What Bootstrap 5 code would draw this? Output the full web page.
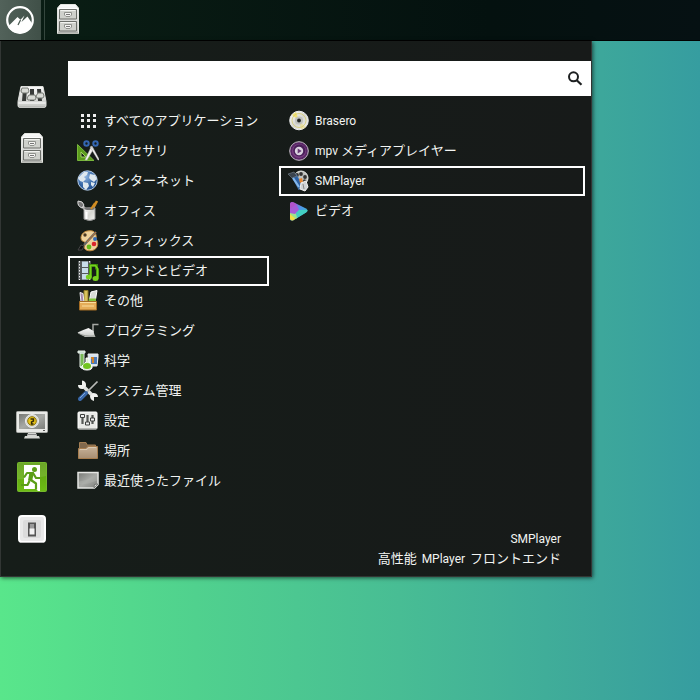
<!DOCTYPE html>
<html lang="ja">
<head>
<meta charset="utf-8">
<meta name="viewport" content="width=device-width, initial-scale=1">
<title>アプリケーションメニュー</title>
<link href="https://cdn.jsdelivr.net/npm/bootstrap@5.3.0/dist/css/bootstrap.min.css" rel="stylesheet">
<style>
body { font-family: "Noto Sans CJK JP", sans-serif; font-size: 13px; line-height: 20px; color: #f2f4f2;
  background: linear-gradient(to right, #59e68b 0%, #50d18e 28%, #48bd94 57%, #3da79b 86%, #369da0 100%); }
svg { display: block; flex: none; }
.latin { font-family: Roboto, sans-serif; font-size: 12px; }
.panel { height: 41px; background: linear-gradient(to right, #0a1e14, #04110f 70%, #061113); border-bottom: 1px solid #000; }
.panel button, .side button { border: 0; padding: 0; background: none; }
.panel .launcher { width: 41px; padding-right: 1px; background: linear-gradient(to right, #52625a, #405048); }
.divider { width: 1px; margin: 0 7px 0 3px; background: #35473e; }
.menu { width: 100%; max-width: 592px; height: 536px; background: linear-gradient(to right, #161d19, #171a19);
  border: solid #323634; border-width: 0 1px 1px 1px; box-shadow: 1px 1px 4px rgba(0,0,0,.6); }
.side { width: 67px; padding: 40px 20px 30px 15px; gap: 20px; }
.content-pane { padding-top: 20px; }
.search-box { height: 35px; background: #fff; color: #1d2021; }
.search-box input { font-size: 13px; outline: 0; }
.search-box label { padding-right: 8px; }
.lists { padding: 10px 6px 0 0; gap: 10px; }
.categories { flex: 201 1 0; }
.apps { flex: 306 1 0; }
.entry { height: 30px; gap: 5px; padding: 0 7px; border: 2px solid transparent; background: none; color: inherit; text-align: left; white-space: nowrap; }
.entry.chosen { border-color: #fff; }
.entry > span { margin-top: -2px; }
.entry > .latin { margin-top: 0; }
.summary { padding: 0 30px 9px; line-height: 20px; }
.summary div { height: 19px; }
.summary div .latin { padding: 0 2px; }
</style>
</head>
<body class="min-vh-100">
<svg width="0" height="0" class="position-absolute" aria-hidden="true">
  <defs>
    <linearGradient id="metal" x2="0" y2="1"><stop stop-color="#fafafa"/><stop offset="1" stop-color="#c4c6c2"/></linearGradient>
    <linearGradient id="silver" x2="1" y2="1"><stop stop-color="#fff"/><stop offset=".5" stop-color="#d5d5d0"/><stop offset="1" stop-color="#f5f5f2"/></linearGradient>
    <linearGradient id="gray" x2="1" y2="1"><stop stop-color="#777975"/><stop offset=".5" stop-color="#a8aaa6"/><stop offset="1" stop-color="#7c7e7a"/></linearGradient>
    <linearGradient id="green" x2="0" y2="1"><stop stop-color="#5b9b10"/><stop offset="1" stop-color="#6dbc15"/></linearGradient>
    <radialGradient id="ocean" cx=".4" cy=".3" r=".8"><stop stop-color="#8fb4e0"/><stop offset=".6" stop-color="#3465a4"/><stop offset="1" stop-color="#204a87"/></radialGradient>
    <linearGradient id="tan" x2="0" y2="1"><stop stop-color="#c7b299"/><stop offset="1" stop-color="#a78e72"/></linearGradient>
    <linearGradient id="play" x2="1" y2="1"><stop stop-color="#a94fd0"/><stop offset=".5" stop-color="#4b9be8"/><stop offset="1" stop-color="#2fd0b0"/></linearGradient>
    <symbol id="cabinet" viewBox="0 0 32 32">
      <path d="M8.500 .5h15l3 3.500v25.500h-21V4z" fill="url(#metal)" stroke="#e2e4df"/>
      <path d="M6 4.500h20" stroke="#fff"/>
      <path d="M7.500 5.500h17v9.500h-17zM7.500 17.500h17v9.500h-17z" fill="#cfd1cc" stroke="#6c6f6a"/>
      <path d="M8.500 6.500h15M8.500 18.500h15" stroke="#f2f3f0"/>
      <path d="M12.500 8.500h7v2.500l-1.500 1.500h-4l-1.500-1.500zM12.500 20.500h7v2.500l-1.500 1.500h-4l-1.500-1.500z" fill="#f4f4f2" stroke="#8f918c"/>
      <path d="M14 10.500h4M14 22.500h4" stroke="#777"/>
      <path d="M6 29h20" stroke="#999b96"/>
    </symbol>
  </defs>
</svg>

<nav class="panel d-flex" aria-label="パネル">
  <button class="launcher d-flex align-items-center justify-content-center" type="button" aria-label="メニュー">
    <svg width="28" height="28" viewBox="0 0 28 28"><circle cx="14" cy="14" r="12.800" fill="none" stroke="#fff" stroke-width="2.200"/><path d="M2 20.500 11.500 11l3 2.800L18.500 9.500 15.500 16l6-5.500 5 7.500a13.500 13.500 0 0 1-24.500 2.500z" fill="#fff"/><path d="m14.500 14-2.500 5" stroke="#4a5a52" stroke-width="1.200"/></svg>
  </button>
  <span class="divider"></span>
  <button type="button" aria-label="ファイル"><svg width="32" height="32"><use href="#cabinet"/></svg></button>
</nav>

<main class="menu d-flex">
  <aside class="side d-flex flex-column flex-shrink-0">
    <button type="button" aria-label="設定"><svg width="32" height="32" viewBox="0 0 32 32">
      <path d="M5 5.500h22l3 15v4q0 2-2 2H4q-2 0-2-2v-4z" fill="url(#metal)" stroke="#dedfdc"/><path d="M2.500 22h27" stroke="#fff"/><path d="M3 26h26" stroke="#aaaca8"/>
      <path d="M7 8h4l-1 12H6zM14 8h4v12h-4zM21 8h4l1 12h-4z" fill="#383b39"/>
      <path d="M6 7h6l1 3-1 2H6l-1-2zM13 14h6l1 3-1 2h-7l-1-2zM22 12h5l1 3-1 2h-6l-1-2z" fill="#d8dad5" stroke="#777a75"/>
    </svg></button>
    <button type="button" aria-label="ファイル"><svg width="32" height="32"><use href="#cabinet"/></svg></button>
    <button class="mt-auto" type="button" aria-label="画面をロック"><svg width="32" height="32" viewBox="0 0 32 32">
      <path d="M12 23h8l1 3h2l1 2.500H8L9 26h2z" fill="#d5d7d3"/><path d="M11 24.500h10" stroke="#888"/>
      <rect x=".5" y="1.500" width="31" height="21" rx="1" fill="#e9eae7" stroke="#aaaca8"/><rect x="3" y="4" width="26" height="15" fill="url(#gray)"/>
      <circle cx="16" cy="11" r="6.500" fill="#d7d9d3" stroke="#eee"/><circle cx="16" cy="11" r="4.300" fill="#e9c51c" stroke="#8d7508"/>
      <path d="M14.500 9h3v2l-2 1v2h2" fill="none" stroke="#342c08" stroke-width="1.400"/><path d="M27 20.500h2" stroke="#555"/>
    </svg></button>
    <button type="button" aria-label="ログアウト"><svg width="32" height="32" viewBox="0 0 32 32">
      <rect x="1.500" y=".5" width="29" height="29" rx="1" fill="url(#green)" stroke="#75b72d"/><path d="M8 3h16v26h-2l-2-2H8z" fill="#fff"/>
      <path d="M2 1h28v13Q16 18 2 17z" fill="#fff" opacity=".1"/>
      <circle cx="18.500" cy="7.500" r="2.500" fill="#5b9e18"/>
      <path d="M14 11h-3l-3 4.500M17 11l3 5h4M13.500 19l-2 4H5M15 18l5 3.500v6" fill="none" stroke="#5b9e18" stroke-width="2.200" stroke-linejoin="round"/><path d="M13.500 10h4.500l-2 9.500-4-1z" fill="#5b9e18"/>
    </svg></button>
    <button type="button" aria-label="シャットダウン"><svg width="32" height="32" viewBox="0 0 32 32">
      <rect x="3" y="2" width="26" height="26" rx="3" fill="#e9e9e9" stroke="#fff" stroke-width="2"/><path d="M4 28.500h24" stroke="#b7b7b7"/>
      <rect x="7" y="6" width="18" height="18" rx="2" fill="#dcdcdc"/><rect x="12" y="8.500" width="8" height="14" fill="#555"/><path d="M14 10h4v5h-4z" fill="#999"/><path d="M13.500 14.500h5v6h-5z" fill="#f2f2f2"/>
    </svg></button>
  </aside>

  <section class="content-pane d-flex flex-column flex-grow-1">
    <div class="search-box d-flex align-items-center">
      <input id="search" class="flex-grow-1 border-0 bg-transparent h-100 px-2" type="text" autocomplete="off">
      <label for="search" aria-label="検索"><svg width="16" height="16" viewBox="0 0 16 16"><circle cx="6.500" cy="5.800" r="4.500" fill="none" stroke="currentColor" stroke-width="2"/><path d="m9.700 9.200 4.800 4.600" stroke="currentColor" stroke-width="2.200"/></svg></label>
    </div>
    <div class="lists d-flex align-items-start">
      <div class="categories d-flex flex-column">
        <button class="entry d-flex align-items-center" type="button"><svg width="22" height="22" viewBox="0 0 22 22"><path d="M4 4h3v3H4zm6 0h3v3h-3zm6 0h3v3h-3zM4 9h3v3H4zm6 0h3v3h-3zm6 0h3v3h-3zM4 15h3v3H4zm6 0h3v3h-3zm6 0h3v3h-3z" fill="#eee"/></svg><span>すべてのアプリケーション</span></button>
        <button class="entry d-flex align-items-center" type="button"><svg width="22" height="22" viewBox="0 0 22 22"><path d="M.5 4.500v16H17z" fill="#5b9c1c" stroke="#78b63b"/><path d="M4 12v5h5z" fill="#171d19" stroke="#a4d366"/><path d="m8 20 6-13 2.500 2-6.500 11zM21 20l-8-13 2-1 7.500 14z" fill="#f4f4f2" stroke="#aaa" stroke-width=".5"/><circle cx="9.500" cy="3.500" r="2.200" fill="none" stroke="#3467b3" stroke-width="2"/><circle cx="18.500" cy="3.500" r="2.200" fill="none" stroke="#3467b3" stroke-width="2"/></svg><span>アクセサリ</span></button>
        <button class="entry d-flex align-items-center" type="button"><svg width="22" height="22" viewBox="0 0 22 22"><circle cx="10.500" cy="10.500" r="9.700" fill="url(#ocean)" stroke="#b5cce8"/><path d="m3 6 4-4h4l-1 3-3 2 2 2-3 3-3-1-2-3zM6 12l5 1 1 3-3 4-3-3zM13 4l5 1 2 4-3 3-3-2-2-2zM14 12l4 1-2 4-2-2z" fill="#dfe8ee"/></svg><span>インターネット</span></button>
        <button class="entry d-flex align-items-center" type="button"><svg width="22" height="22" viewBox="0 0 22 22"><path d="M2 3l8 8" stroke="#bbb" stroke-width="3"/><path d="M1 1q5 0 6 4l-2 3Q0 6 1 1z" fill="#777" stroke="#ddd"/><path d="m14 12 6-11" stroke="#d28d22" stroke-width="2.600"/><path d="M7 8h11v11q-5 3-11 0z" fill="url(#silver)" stroke="#999"/><ellipse cx="12.500" cy="8.500" rx="5" ry="1.500" fill="#777"/><path d="m14 9 4-6" stroke="#d28d22" stroke-width="2"/><path d="M9.500 12v7" stroke="#fff" stroke-width="2"/></svg><span>オフィス</span></button>
        <button class="entry d-flex align-items-center" type="button"><svg width="22" height="22" viewBox="0 0 22 22"><path d="M12 .8c6-1 8 4 7 8 4 5 1 12-6 12-5 0-7-3-5-6 2-2-1-3-3-4-3-4 1-10 7-10z" fill="#efd29c" stroke="#bd873c"/><circle cx="8" cy="5" r="1.700" fill="#4c3a22"/><circle cx="18" cy="9" r="2" fill="#346cb6"/><circle cx="17" cy="14" r="2.300" fill="#d9262c"/><circle cx="12" cy="17" r="2.400" fill="#65b91b"/><path d="m19 2-12 13" stroke="#666" stroke-width="2.400"/><path d="m19 2-9 10" stroke="#c7752b"/><path d="m1 20 3-5 3 1-2 4z" fill="#111" stroke="#444"/></svg><span>グラフィックス</span></button>
        <button class="entry chosen d-flex align-items-center" type="button" aria-pressed="true"><svg width="22" height="22" viewBox="0 0 22 22"><path d="M1 1h13v19H1z" fill="#555a5b"/><path d="M5 1.500h6V7H5zM5 8h6v5H5zm0 6h6v5.500H5z" fill="#c7dce9"/><path d="M2.500 1v19M12.500 1v19" stroke="#eee" stroke-dasharray="1.500"/><path d="M13.500 17V5.500h6v3l1 1v9" fill="none" stroke="#398a07" stroke-width="3"/><ellipse cx="11.800" cy="17" rx="3" ry="2.500" fill="#77d01e"/><ellipse cx="18.500" cy="18.500" rx="3" ry="2.500" fill="#77d01e"/><path d="M13.500 16V5.500h5l2 3v9" fill="none" stroke="#77d01e" stroke-width="1.700"/></svg><span>サウンドとビデオ</span></button>
        <button class="entry d-flex align-items-center" type="button"><svg width="22" height="22" viewBox="0 0 22 22"><path d="M7 .5h4V13H7z" fill="#d7c35c" stroke="#917d24"/><path d="m3 2.500 3 1 1 9H4z" fill="#a488a9" stroke="#eee"/><path d="m14 2 6-1.500-2 12h-6z" fill="#d8dbd7" stroke="#fff"/><path d="M12 8.500h7v4h-7z" fill="#80c53b"/><path d="M2.500 11.500h17v8.500h-17z" fill="#e5ad59" stroke="#a46c24"/><path d="M3 12.500h16M5 16h12" stroke="#f9dd9f"/></svg><span>その他</span></button>
        <button class="entry d-flex align-items-center" type="button"><svg width="22" height="22" viewBox="0 0 22 22"><path d="M16 12V4.500h5.500" fill="none" stroke="#a6a8a4" stroke-width="1.500"/><path d="M.5 12.500q6-3 11-4.500l5 3 1 4 1 2H8z" fill="url(#metal)"/><path d="M1 13q6 4 17 3" stroke="#969994" fill="none"/></svg><span>プログラミング</span></button>
        <button class="entry d-flex align-items-center" type="button"><svg width="22" height="22" viewBox="0 0 22 22"><path d="M1 1h7v2H7v14q-2 3-4 0V3H1z" fill="#c8ded0" stroke="#e5eee7"/><path d="M3.500 4h3v12h-3z" fill="#79b956"/><path d="M11 4h10v3l-1 9h-8z" fill="#d7e4f0" stroke="#eee"/><path d="M14 7h6v7h-6z" fill="#4b79b7"/><path d="M14 8h2v5" stroke="#d28329" stroke-width="2" fill="none"/><path d="M9 8h3v4l3 4q1 4-5 4t-5-4l4-4z" fill="#deedd3" stroke="#fff"/><ellipse cx="10" cy="16" rx="4" ry="3" fill="#72c51f"/></svg><span>科学</span></button>
        <button class="entry d-flex align-items-center" type="button"><svg width="22" height="22" viewBox="0 0 22 22"><path d="m6 6 11 11" stroke="#dfe1de" stroke-width="3.500"/><path d="M5 .5V5H1q0 4.500 5 4l3-3q.5-5-4-5.500zM17 21v-4l4 0q0-4-5-4l-3 3q0 4 4 5z" fill="#f0f1ef"/><path d="m20.500 1.500-11.500 11.500" stroke="#b9bbb8" stroke-width="1.700"/><path d="m9 13-6 6" stroke="#3a69aa" stroke-width="4" stroke-linecap="round"/><path d="m8 13-5 5" stroke="#84aadd" stroke-width="1"/></svg><span>システム管理</span></button>
        <button class="entry d-flex align-items-center" type="button"><svg width="22" height="22" viewBox="0 0 22 22"><rect x="1" y="2" width="19" height="17" rx="1" fill="#e9eae7" stroke="#fff"/><path d="M1 18.500h19" stroke="#b5b7b3"/><path d="M5.500 5v9M10.500 5v9M15.500 5v9" stroke="#565956" stroke-width="2.200"/><path d="M3.500 4.500h4v3h-4zM8.500 12h4v3h-4zM13.500 8h4v3h-4z" fill="#eee" stroke="#3e413f"/></svg><span>設定</span></button>
        <button class="entry d-flex align-items-center" type="button"><svg width="22" height="22" viewBox="0 0 22 22"><path d="M2.500 9V2.500H9l1 2.500h8.500v4z" fill="#80684d" stroke="#a47f55"/><path d="M1.500 8.500H9l2-2h9.500v12h-19z" fill="url(#tan)" stroke="#a77d4e"/><path d="M3 9.500h7l1.500-2H19" fill="none" stroke="#d8c8b3"/></svg><span>場所</span></button>
        <button class="entry d-flex align-items-center" type="button"><svg width="22" height="22" viewBox="0 0 22 22"><path d="M1 2.500h20v12L17.500 18H1z" fill="url(#gray)" stroke="#e5e6e3" stroke-width="1.500"/><path d="M2 11.500Q10 10.500 20 4.500v6Q10 15 2 14z" fill="#b1b3af" opacity=".4"/><path d="m17 18 .5-3.500 3.500-.5z" fill="#d9dad7" stroke="#5f625f" stroke-width=".7"/></svg><span>最近使ったファイル</span></button>
      </div>
      <div class="apps d-flex flex-column">
        <button class="entry d-flex align-items-center" type="button"><svg width="22" height="22" viewBox="0 0 22 22"><circle cx="11" cy="10.500" r="9.300" fill="url(#silver)" stroke="#eee"/><path d="M11 10.500 4 5l4-3z" fill="#f1df58" opacity=".8"/><path d="m11 10.500 7 7-5 2z" fill="#eadb80" opacity=".6"/><circle cx="11" cy="10.500" r="7" fill="none" stroke="#d5cc6b" stroke-width=".8"/><circle cx="11" cy="10.500" r="4" fill="#bfc1bd"/><circle cx="11" cy="10.500" r="1.900" fill="#20221f"/></svg><span class="latin">Brasero</span></button>
        <button class="entry d-flex align-items-center" type="button"><svg width="22" height="22" viewBox="0 0 22 22"><circle cx="11" cy="11" r="9.300" fill="#592866" stroke="#c4bdc6"/><circle cx="11" cy="11" r="7" fill="#7a3f82"/><circle cx="11.300" cy="10.500" r="6" fill="#482058"/><circle cx="11" cy="11" r="4.200" fill="#dad3df"/><path d="m9.700 8.500 4 2.500-4 2.500z" fill="#693a76"/></svg><span><span class="latin">mpv</span> メディアプレイヤー</span></button>
        <button class="entry chosen d-flex align-items-center" type="button" aria-pressed="true"><svg width="22" height="22" viewBox="0 0 22 22"><circle cx="13" cy="8" r="7" fill="#bfc1bd" stroke="#e6e7e5"/><circle cx="13" cy="4" r="1.900" fill="#333"/><circle cx="17" cy="7" r="1.900" fill="#333"/><circle cx="9" cy="5" r="1.900" fill="#333"/><circle cx="16.500" cy="11" r="1.700" fill="#444"/><path d="m3 5 5-1 6 10-3 6z" fill="#2e61a2" stroke="#4f7fb8" stroke-width=".6"/><path d="m0 4 6-2 3 4-5 2z" fill="#3a444e" stroke="#77818b" stroke-width=".6"/><path d="m5 8 6 9" stroke="#84b7eb" stroke-width="2.200"/><path d="m11 9 3-1 1 4-3 1z" fill="#e48531"/><path d="m13 13 5-2 2 6-3 4-5-2z" fill="#d0d3d5" stroke="#f2f2f2"/><path d="m15 14 1 5" stroke="#888"/></svg><span class="latin">SMPlayer</span></button>
        <button class="entry d-flex align-items-center" type="button"><svg width="22" height="22" viewBox="0 0 22 22"><path d="M4 2q-2 0-2 2v15q0 2 3 1.500l13-8q3-2 0-4L7 3z" fill="url(#play)"/><path d="M2 12l7-7-3-2.500q-4-1-4 2.500z" fill="#b252ca"/><path d="M2 13l6 5.500-3 2q-3 0-3-2z" fill="#f0df45"/><path d="m2 10 5 2 3 5-2 2-6-5z" fill="#9be38f"/><path d="m2 9 6-5 3 6-4 4-5-1z" fill="#a85bd6"/><path d="m8 13 3-3h8.500q0 1.500-1.500 2.500L9 18z" fill="#42cfc2"/></svg><span>ビデオ</span></button>
      </div>
    </div>
    <div class="summary mt-auto text-end"><div class="latin">SMPlayer</div><div>高性能 <span class="latin">MPlayer</span> フロントエンド</div></div>
  </section>
</main>
<script src="https://cdn.jsdelivr.net/npm/bootstrap@5.3.0/dist/js/bootstrap.bundle.min.js"></script>
</body>
</html>
